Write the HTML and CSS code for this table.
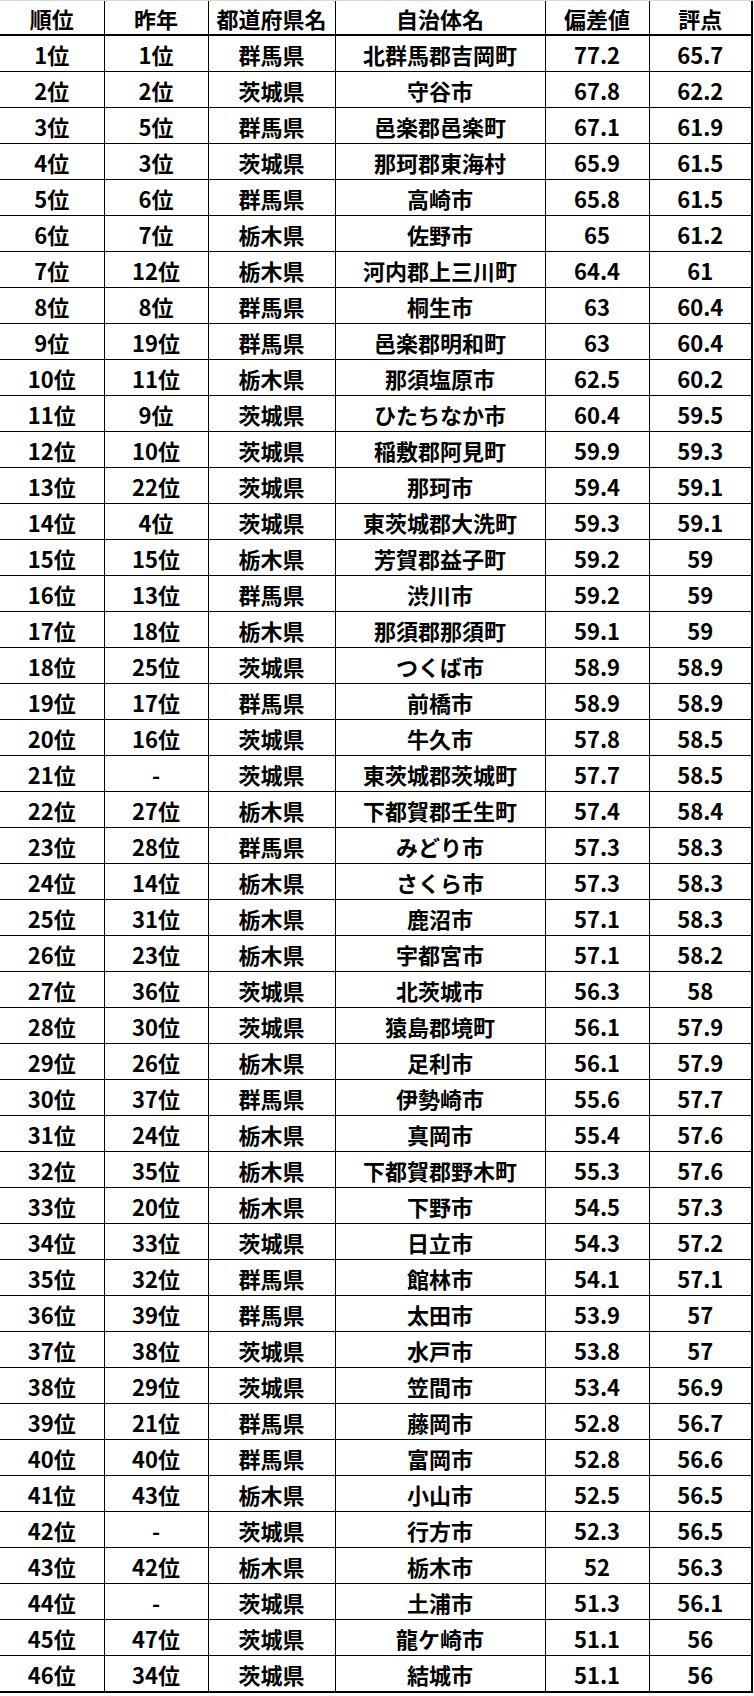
FILE: index.html
```html
<!DOCTYPE html>
<html lang="ja">
<head>
<meta charset="utf-8">
<link rel="stylesheet" href="styles.css">
</head>
<body>
<div class="wrap">
<table class="rank">
<colgroup>
<col class="c1"><col class="c2"><col class="c3"><col class="c4"><col class="c5"><col class="c6">
</colgroup>
<thead>
<tr><th>順位</th><th>昨年</th><th>都道府県名</th><th>自治体名</th><th>偏差値</th><th>評点</th></tr>
</thead>
<tbody>
<tr><td>1位</td><td>1位</td><td>群馬県</td><td>北群馬郡吉岡町</td><td>77.2</td><td>65.7</td></tr>
<tr><td>2位</td><td>2位</td><td>茨城県</td><td>守谷市</td><td>67.8</td><td>62.2</td></tr>
<tr><td>3位</td><td>5位</td><td>群馬県</td><td>邑楽郡邑楽町</td><td>67.1</td><td>61.9</td></tr>
<tr><td>4位</td><td>3位</td><td>茨城県</td><td>那珂郡東海村</td><td>65.9</td><td>61.5</td></tr>
<tr><td>5位</td><td>6位</td><td>群馬県</td><td>高崎市</td><td>65.8</td><td>61.5</td></tr>
<tr><td>6位</td><td>7位</td><td>栃木県</td><td>佐野市</td><td>65</td><td>61.2</td></tr>
<tr><td>7位</td><td>12位</td><td>栃木県</td><td>河内郡上三川町</td><td>64.4</td><td>61</td></tr>
<tr><td>8位</td><td>8位</td><td>群馬県</td><td>桐生市</td><td>63</td><td>60.4</td></tr>
<tr><td>9位</td><td>19位</td><td>群馬県</td><td>邑楽郡明和町</td><td>63</td><td>60.4</td></tr>
<tr><td>10位</td><td>11位</td><td>栃木県</td><td>那須塩原市</td><td>62.5</td><td>60.2</td></tr>
<tr><td>11位</td><td>9位</td><td>茨城県</td><td>ひたちなか市</td><td>60.4</td><td>59.5</td></tr>
<tr><td>12位</td><td>10位</td><td>茨城県</td><td>稲敷郡阿見町</td><td>59.9</td><td>59.3</td></tr>
<tr><td>13位</td><td>22位</td><td>茨城県</td><td>那珂市</td><td>59.4</td><td>59.1</td></tr>
<tr><td>14位</td><td>4位</td><td>茨城県</td><td>東茨城郡大洗町</td><td>59.3</td><td>59.1</td></tr>
<tr><td>15位</td><td>15位</td><td>栃木県</td><td>芳賀郡益子町</td><td>59.2</td><td>59</td></tr>
<tr><td>16位</td><td>13位</td><td>群馬県</td><td>渋川市</td><td>59.2</td><td>59</td></tr>
<tr><td>17位</td><td>18位</td><td>栃木県</td><td>那須郡那須町</td><td>59.1</td><td>59</td></tr>
<tr><td>18位</td><td>25位</td><td>茨城県</td><td>つくば市</td><td>58.9</td><td>58.9</td></tr>
<tr><td>19位</td><td>17位</td><td>群馬県</td><td>前橋市</td><td>58.9</td><td>58.9</td></tr>
<tr><td>20位</td><td>16位</td><td>茨城県</td><td>牛久市</td><td>57.8</td><td>58.5</td></tr>
<tr><td>21位</td><td>-</td><td>茨城県</td><td>東茨城郡茨城町</td><td>57.7</td><td>58.5</td></tr>
<tr><td>22位</td><td>27位</td><td>栃木県</td><td>下都賀郡壬生町</td><td>57.4</td><td>58.4</td></tr>
<tr><td>23位</td><td>28位</td><td>群馬県</td><td>みどり市</td><td>57.3</td><td>58.3</td></tr>
<tr><td>24位</td><td>14位</td><td>栃木県</td><td>さくら市</td><td>57.3</td><td>58.3</td></tr>
<tr><td>25位</td><td>31位</td><td>栃木県</td><td>鹿沼市</td><td>57.1</td><td>58.3</td></tr>
<tr><td>26位</td><td>23位</td><td>栃木県</td><td>宇都宮市</td><td>57.1</td><td>58.2</td></tr>
<tr><td>27位</td><td>36位</td><td>茨城県</td><td>北茨城市</td><td>56.3</td><td>58</td></tr>
<tr><td>28位</td><td>30位</td><td>茨城県</td><td>猿島郡境町</td><td>56.1</td><td>57.9</td></tr>
<tr><td>29位</td><td>26位</td><td>栃木県</td><td>足利市</td><td>56.1</td><td>57.9</td></tr>
<tr><td>30位</td><td>37位</td><td>群馬県</td><td>伊勢崎市</td><td>55.6</td><td>57.7</td></tr>
<tr><td>31位</td><td>24位</td><td>栃木県</td><td>真岡市</td><td>55.4</td><td>57.6</td></tr>
<tr><td>32位</td><td>35位</td><td>栃木県</td><td>下都賀郡野木町</td><td>55.3</td><td>57.6</td></tr>
<tr><td>33位</td><td>20位</td><td>栃木県</td><td>下野市</td><td>54.5</td><td>57.3</td></tr>
<tr><td>34位</td><td>33位</td><td>茨城県</td><td>日立市</td><td>54.3</td><td>57.2</td></tr>
<tr><td>35位</td><td>32位</td><td>群馬県</td><td>館林市</td><td>54.1</td><td>57.1</td></tr>
<tr><td>36位</td><td>39位</td><td>群馬県</td><td>太田市</td><td>53.9</td><td>57</td></tr>
<tr><td>37位</td><td>38位</td><td>茨城県</td><td>水戸市</td><td>53.8</td><td>57</td></tr>
<tr><td>38位</td><td>29位</td><td>茨城県</td><td>笠間市</td><td>53.4</td><td>56.9</td></tr>
<tr><td>39位</td><td>21位</td><td>群馬県</td><td>藤岡市</td><td>52.8</td><td>56.7</td></tr>
<tr><td>40位</td><td>40位</td><td>群馬県</td><td>富岡市</td><td>52.8</td><td>56.6</td></tr>
<tr><td>41位</td><td>43位</td><td>栃木県</td><td>小山市</td><td>52.5</td><td>56.5</td></tr>
<tr><td>42位</td><td>-</td><td>茨城県</td><td>行方市</td><td>52.3</td><td>56.5</td></tr>
<tr><td>43位</td><td>42位</td><td>栃木県</td><td>栃木市</td><td>52</td><td>56.3</td></tr>
<tr><td>44位</td><td>-</td><td>茨城県</td><td>土浦市</td><td>51.3</td><td>56.1</td></tr>
<tr><td>45位</td><td>47位</td><td>茨城県</td><td>龍ケ崎市</td><td>51.1</td><td>56</td></tr>
<tr><td>46位</td><td>34位</td><td>茨城県</td><td>結城市</td><td>51.1</td><td>56</td></tr>
</tbody>
</table>
</div>
</body>
</html>
```

FILE: styles.css
```css
html, body {
  margin: 0;
  padding: 0;
  background: #ffffff;
}
.wrap {
  border-top: 1px solid #d8d8d8;
  width: 754px;
}
.rank {
  border-collapse: collapse;
  table-layout: fixed;
  width: 752px;
  font-family: "Noto Sans CJK JP", "Noto Sans", sans-serif;
  font-weight: 700;
  font-size: 22px;
  color: #000;
  border-right: 2px solid #000;
  border-bottom: 2px solid #000;
}
.c1 { width: 104px; }
.c2 { width: 104px; }
.c3 { width: 127px; }
.c4 { width: 210px; }
.c5 { width: 104px; }
.c6 { width: 103px; }
.rank th,
.rank td {
  padding: 0;
  text-align: center;
  vertical-align: middle;
  line-height: 22px;
  border-left: 1px solid #000;
  border-top: 1px solid #000;
  white-space: nowrap;
  overflow: hidden;
}
.rank th {
  height: 33px;
  border-top: none;
  font-weight: 700;
}
.rank th:first-child,
.rank td:first-child {
  border-left: none;
}
.rank td {
  height: 35px;
}
.rank tbody tr:first-child td {
  border-top: 2px solid #000;
}
```
